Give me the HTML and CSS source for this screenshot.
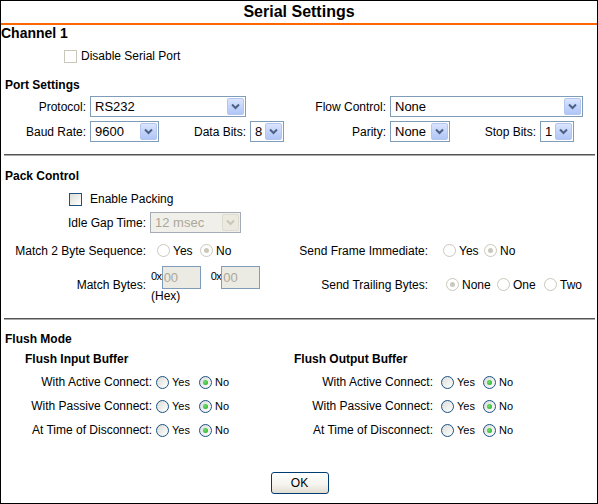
FILE: index.html
```html
<!DOCTYPE html>
<html>
<head>
<meta charset="utf-8">
<link rel="stylesheet" href="styles.css">
</head>
<body>
<div class="page">
  <div class="title">Serial Settings</div>
  <div class="channel">Channel 1</div>
  <div class="disable-row"><span class="cb cb-dis"></span><span class="cb-text">Disable Serial Port</span></div>

  <div class="heading port-h">Port Settings</div>
  <div class="row port-r1">
    <span class="lbl w89">Protocol:</span>
    <div class="sel w156"><span class="val">RS232</span><span class="arr"><svg width="9" height="7" viewBox="0 0 9 7"><polyline points="1,1.5 4.5,5 8,1.5" fill="none" stroke="#4d6185" stroke-width="2"/></svg></span></div>
    <span class="lbl w144">Flow Control:</span>
    <div class="sel w193"><span class="val">None</span><span class="arr"><svg width="9" height="7" viewBox="0 0 9 7"><polyline points="1,1.5 4.5,5 8,1.5" fill="none" stroke="#4d6185" stroke-width="2"/></svg></span></div>
  </div>
  <div class="row port-r2">
    <span class="lbl w89">Baud Rate:</span>
    <div class="sel w69"><span class="val">9600</span><span class="arr"><svg width="9" height="7" viewBox="0 0 9 7"><polyline points="1,1.5 4.5,5 8,1.5" fill="none" stroke="#4d6185" stroke-width="2"/></svg></span></div>
    <span class="lbl w91">Data Bits:</span>
    <div class="sel w34"><span class="val">8</span><span class="arr"><svg width="9" height="7" viewBox="0 0 9 7"><polyline points="1,1.5 4.5,5 8,1.5" fill="none" stroke="#4d6185" stroke-width="2"/></svg></span></div>
    <span class="lbl w106">Parity:</span>
    <div class="sel w60"><span class="val">None</span><span class="arr"><svg width="9" height="7" viewBox="0 0 9 7"><polyline points="1,1.5 4.5,5 8,1.5" fill="none" stroke="#4d6185" stroke-width="2"/></svg></span></div>
    <span class="lbl w90">Stop Bits:</span>
    <div class="sel w34"><span class="val">1</span><span class="arr"><svg width="9" height="7" viewBox="0 0 9 7"><polyline points="1,1.5 4.5,5 8,1.5" fill="none" stroke="#4d6185" stroke-width="2"/></svg></span></div>
  </div>

  <div class="rule rule1"></div>

  <div class="heading pack-h">Pack Control</div>
  <div class="enable-row"><span class="cb"></span><span class="cb-text">Enable Packing</span></div>
  <div class="row idle-row">
    <span class="lbl w149">Idle Gap Time:</span>
    <div class="sel sel-dis w91"><span class="val">12 msec</span><span class="arr arr-dis"><svg width="9" height="7" viewBox="0 0 9 7"><polyline points="1,1.5 4.5,5 8,1.5" fill="none" stroke="#c9c7ba" stroke-width="2"/></svg></span></div>
  </div>
  <div class="row match-row">
    <span class="lbl w149">Match 2 Byte Sequence:</span>
    <span class="opts ml7 w133">
      <span class="opt w43"><span class="rd dis"></span><span class="ot">Yes</span></span>
      <span class="opt"><span class="rd dis on"></span><span class="ot">No</span></span>
    </span>
    <span class="lbl w153 pr15">Send Frame Immediate:</span>
    <span class="opts">
      <span class="opt w41"><span class="rd dis"></span><span class="ot">Yes</span></span>
      <span class="opt"><span class="rd dis on"></span><span class="ot">No</span></span>
    </span>
  </div>
  <div class="row bytes-row">
    <span class="lbl w149">Match Bytes:</span>
    <div class="bytes w140">
      <div class="bytes-line">
        <span class="hex">0x</span><span class="inp">00</span>
        <span class="hex hex2">0x</span><span class="inp">00</span>
      </div>
      <div class="hexnote">(Hex)</div>
    </div>
    <span class="lbl w156 pr18">Send Trailing Bytes:</span>
    <span class="opts">
      <span class="opt w51"><span class="rd dis on"></span><span class="ot">None</span></span>
      <span class="opt w47"><span class="rd dis"></span><span class="ot">One</span></span>
      <span class="opt"><span class="rd dis"></span><span class="ot">Two</span></span>
    </span>
  </div>

  <div class="rule rule2"></div>

  <div class="heading flush-h">Flush Mode</div>
  <div class="flush">
    <div class="fcol fleft">
      <div class="subh pl24">Flush Input Buffer</div>
      <div class="frow first">
        <span class="lbl w155">With Active Connect:</span>
        <span class="opt w43"><span class="rd"></span><span class="ot">Yes</span></span>
        <span class="opt"><span class="rd on"></span><span class="ot">No</span></span>
      </div>
      <div class="frow">
        <span class="lbl w155">With Passive Connect:</span>
        <span class="opt w43"><span class="rd"></span><span class="ot">Yes</span></span>
        <span class="opt"><span class="rd on"></span><span class="ot">No</span></span>
      </div>
      <div class="frow">
        <span class="lbl w155">At Time of Disconnect:</span>
        <span class="opt w43"><span class="rd"></span><span class="ot">Yes</span></span>
        <span class="opt"><span class="rd on"></span><span class="ot">No</span></span>
      </div>
    </div>
    <div class="fcol">
      <div class="subh pl4">Flush Output Buffer</div>
      <div class="frow first">
        <span class="lbl w151 pr8">With Active Connect:</span>
        <span class="opt w42"><span class="rd"></span><span class="ot">Yes</span></span>
        <span class="opt"><span class="rd on"></span><span class="ot">No</span></span>
      </div>
      <div class="frow">
        <span class="lbl w151 pr8">With Passive Connect:</span>
        <span class="opt w42"><span class="rd"></span><span class="ot">Yes</span></span>
        <span class="opt"><span class="rd on"></span><span class="ot">No</span></span>
      </div>
      <div class="frow">
        <span class="lbl w151 pr8">At Time of Disconnect:</span>
        <span class="opt w42"><span class="rd"></span><span class="ot">Yes</span></span>
        <span class="opt"><span class="rd on"></span><span class="ot">No</span></span>
      </div>
    </div>
  </div>

  <div class="btn-row"><button class="btn">OK</button></div>
</div>
</body>
</html>
```
FILE: styles.css
```css
html, body { margin: 0; padding: 0; background: #fff; }
body { font-family: "Liberation Sans", Arial, sans-serif; font-size: 12px; color: #000; }
.page {
  width: 598px; height: 504px; box-sizing: border-box;
  border: 1px solid #000; overflow: hidden;
  display: flex; flex-direction: column;
}
.title {
  height: 22px; line-height: 22px; text-align: center;
  font-weight: bold; font-size: 16px;
  border-bottom: 2px solid #ff6600; flex: none;
}
.channel { height: 17px; line-height: 17px; font-weight: bold; font-size: 14px; flex: none; }
.disable-row { margin-top: 7px; height: 14px; padding-left: 63px; display: flex; align-items: center; flex: none; }
.enable-row { margin-top: 7px; height: 16px; padding-left: 68px; display: flex; align-items: center; flex: none; }
.cb {
  width: 13px; height: 13px; box-sizing: border-box; flex: none;
  border: 1px solid #1c5180;
  background: linear-gradient(135deg, #dcdcd7, #fff);
}
.cb-dis { border-color: #cac8bb; background: #fff; }
.disable-row .cb-text { margin-left: 4px; }
.enable-row .cb-text { margin-left: 8px; }

.heading { height: 16px; line-height: 16px; font-weight: bold; font-size: 12px; padding-left: 4px; flex: none; }
.port-h { margin-top: 14px; }
.pack-h { margin-top: 12px; }
.flush-h { margin-top: 11px; }

.row { display: flex; align-items: center; flex: none; }
.port-r1 { margin-top: 3px; height: 21px; }
.port-r2 { margin-top: 4px; height: 21px; }
.idle-row { margin-top: 5px; height: 21px; }
.match-row { margin-top: 9px; height: 17px; }
.bytes-row { margin-top: 7px; height: 37px; }

.lbl { flex: none; text-align: right; padding-right: 4px; box-sizing: border-box; white-space: nowrap; }
.pr15 { padding-right: 15px; }
.pr18 { padding-right: 18px; }
.pr8 { padding-right: 8px; }
.w34 { width: 34px; } .w41 { width: 41px; } .w42 { width: 42px; } .w43 { width: 43px; }
.w47 { width: 47px; } .w51 { width: 51px; } .w60 { width: 60px; } .w69 { width: 69px; }
.w89 { width: 89px; } .w90 { width: 90px; } .w91 { width: 91px; } .w106 { width: 106px; }
.w133 { width: 133px; } .w140 { width: 140px; } .w144 { width: 144px; } .w149 { width: 149px; }
.w151 { width: 151px; } .w153 { width: 153px; } .w155 { width: 155px; } .w156 { width: 156px; }
.w193 { width: 193px; }
.ml7 { margin-left: 7px; }

.sel {
  flex: none; height: 21px; box-sizing: border-box;
  border: 1px solid #7f9db9; background: #fff;
  display: flex; align-items: center; justify-content: space-between;
  padding: 0 1px 0 4px; font-size: 13px; overflow: hidden;
}
.sel .val { white-space: nowrap; }
.arr {
  width: 17px; height: 17px; box-sizing: border-box; flex: none;
  border: 1px solid #b4c6ef; border-radius: 2px;
  background: linear-gradient(180deg, #dbe5fd 0%, #c3d4fb 50%, #b0c6f6 100%);
  display: flex; align-items: center; justify-content: center;
}
.sel-dis { background: #f0efe9; border-color: #a5acb5; color: #aca899; }
.arr-dis { background: #ebe9e0; border-color: #dedbd0; }

.opts { display: flex; align-items: center; flex: none; }
.opt { display: flex; align-items: center; flex: none; }
.rd {
  width: 13px; height: 13px; border-radius: 50%; box-sizing: border-box; flex: none;
  border: 1px solid #1c5180;
  background: linear-gradient(135deg, #dcdcd7, #fff);
  display: flex; align-items: center; justify-content: center;
}
.rd.on::after {
  content: ""; width: 5px; height: 5px; border-radius: 50%;
  background: radial-gradient(circle at 40% 40%, #6ce46c, #21a121);
}
.rd.dis { border-color: #cac8bb; background: #fff; }
.rd.dis.on::after { background: #cac8bb; }
.ot { margin-left: 3px; font-size: 11px; }
.opts .ot { font-size: 12px; }

.bytes { flex: none; display: flex; flex-direction: column; height: 37px; padding-left: 1px; box-sizing: border-box; }
.bytes-line { display: flex; align-items: flex-start; height: 23px; }
.hex { font-size: 11px; line-height: 21px; letter-spacing: -0.5px; }
.hex2 { margin-left: 10px; }
.inp {
  width: 39px; height: 23px; box-sizing: border-box;
  border: 1px solid #7f9db9; background: #ebebe4; color: #aca899;
  font-size: 13px; line-height: 21px; padding-left: 1px;
}
.hexnote { line-height: 14px; font-size: 12px; }

.rule { height: 0; border-top: 1px solid #555; border-bottom: 1px solid #aaa; margin-left: 3px; margin-right: 2px; flex: none; }
.rule1 { margin-top: 12px; }
.rule2 { margin-top: 15px; }

.flush { display: flex; flex: none; }
.fcol { display: flex; flex-direction: column; }
.fleft { width: 289px; }
.subh { margin-top: 4px; height: 16px; line-height: 16px; font-weight: bold; }
.pl24 { padding-left: 24px; }
.pl4 { padding-left: 4px; }
.frow { display: flex; align-items: center; height: 24px; }
.frow.first { margin-top: 3px; }

.btn-row { margin-top: 30px; display: flex; justify-content: center; flex: none; }
.btn {
  width: 58px; height: 22px; box-sizing: border-box; margin-left: 1px;
  border: 1px solid #003c74; border-radius: 3px;
  background: linear-gradient(180deg, #ffffff 0%, #f4f3ee 60%, #e0ddd1 100%);
  font-family: "Liberation Sans", Arial, sans-serif; font-size: 12px; color: #000; padding: 0;
}
```
